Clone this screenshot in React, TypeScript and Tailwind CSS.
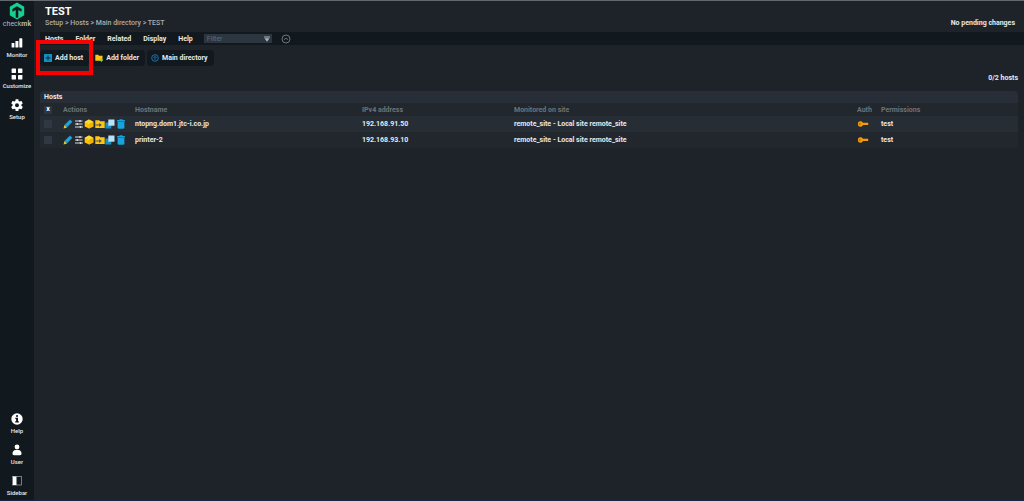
import type { ReactNode } from "react";

interface Host {
  name: string;
  ip: string;
  site: string;
  permissions: string;
}

const hosts: Host[] = [
  {
    name: "ntopng.dom1.jtc-i.co.jp",
    ip: "192.168.91.50",
    site: "remote_site - Local site remote_site",
    permissions: "test",
  },
  {
    name: "printer-2",
    ip: "192.168.93.10",
    site: "remote_site - Local site remote_site",
    permissions: "test",
  },
];

const menus = ["Hosts", "Folder", "Related", "Display", "Help"];

function Logo() {
  return (
    <svg viewBox="0 0 16 18" className="w-4 h-[18px]">
      <path d="M8 0.5 15.2 4.7v8.6L8 17.5 0.8 13.3V4.7z" fill="#15d18f" />
      <path d="M3.4 9.8V6.9L8 4.2l4.6 2.7v2.9L9.3 7.9v7.4L8 16l-1.3-.7V7.9z" fill="#11181e" />
    </svg>
  );
}

function MonitorIcon() {
  return (
    <svg viewBox="0 0 12 12" className="w-3 h-3" fill="#fff">
      <rect x="0.6" y="6" width="2.8" height="4.6" rx="0.6" />
      <rect x="4.4" y="4" width="3" height="6.6" rx="0.6" />
      <rect x="8.3" y="1.3" width="3" height="9.3" rx="0.6" />
    </svg>
  );
}

function CustomizeIcon() {
  return (
    <svg viewBox="0 0 12 12" className="w-3 h-3" fill="#fff">
      <rect x="0.6" y="0.6" width="4.4" height="4.4" rx="0.4" />
      <rect x="7" y="0.6" width="4.4" height="4.4" rx="0.4" />
      <rect x="0.6" y="7" width="4.4" height="4.4" rx="0.4" />
      <rect x="7" y="7" width="4.4" height="4.4" rx="0.4" />
    </svg>
  );
}

function SetupIcon() {
  return (
    <svg viewBox="0 0 23 23" className="w-3 h-3">
      <path
        fill="#fff"
        d="M19.9 12.9a8 8 0 0 0 0-2.2l2.4-1.9c.2-.2.3-.5.1-.8l-2.3-4c-.1-.2-.4-.3-.7-.2l-2.900 1.100a8.500 8.500 0 0 0-1.900-1.100L14.200.8a.6.6 0 0 0-.6-.5H9.400c-.3 0-.5.2-.6.500l-.4 3a8.900 8.900 0 0 0-1.900 1.100L3.600 3.800c-.3-.1-.6 0-.7.200l-2.300 4c-.1.300-.1.600.1.800l2.400 1.900a8 8 0 0 0 0 2.200L.7 14.800c-.2.200-.3.500-.1.800l2.300 4c.1.200.4.300.7.200l2.900-1.100c.6.400 1.200.8 1.900 1.100l.4 3c.1.300.3.500.6.500h4.200c.3 0 .5-.2.600-.500l.4-3a8.500 8.500 0 0 0 1.900-1.100l2.900 1.100c.3.100.6 0 .7-.200l2.300-4c.1-.300.1-.600-.1-.800zM11.500 15.600a3.800 3.800 0 1 1 0-7.600 3.800 3.800 0 0 1 0 7.600z"
      />
    </svg>
  );
}

function HelpIcon() {
  return (
    <svg viewBox="0 0 12 12" className="w-3 h-3">
      <circle cx="6" cy="6" r="5.700" fill="#fff" />
      <circle cx="6" cy="3" r="1.100" fill="#11181e" />
      <path d="M4.300 4.800H7v3.500h.9v1.200H4.200V8.300h.9V6h-.8z" fill="#11181e" />
    </svg>
  );
}

function UserIcon() {
  return (
    <svg viewBox="0 0 12 12" className="w-3 h-3" fill="#fff">
      <circle cx="6" cy="3" r="2.400" />
      <path d="M1.500 9.500C1.500 7.300 3 6 4.500 6h3c1.500 0 3 1.300 3 3.500 0 1-.5 1.700-1.500 1.700H3c-1 0-1.500-.7-1.500-1.700z" />
    </svg>
  );
}

function SidebarIcon() {
  return (
    <svg viewBox="0 0 12 12" className="w-3 h-3">
      <rect x="1.500" y="1.500" width="9" height="8.500" fill="none" stroke="#a4a9ad" strokeWidth="0.700" />
      <rect x="2" y="1.500" width="3.500" height="8.500" fill="#fff" />
    </svg>
  );
}

function PlusIcon() {
  return (
    <svg viewBox="0 0 8 8" className="w-2 h-2">
      <rect width="8" height="8" rx="0.500" fill="#1590c4" />
      <path d="M4 1.500v5M1.500 4h5" stroke="#0e2c3e" strokeWidth="1" />
    </svg>
  );
}

function FolderPlusIcon() {
  return (
    <svg viewBox="0 0 8 8" className="w-2 h-2">
      <path d="M0.300 0.800h2.900l.8 1h3.500v5H.3z" fill="#fdc615" />
      <path d="M6.300 4.600v3.200M4.700 6.200h3.200" stroke="#8ccf4d" strokeWidth="1.200" />
    </svg>
  );
}

function UpIcon() {
  return (
    <svg viewBox="0 0 8 8" className="w-2 h-2" fill="none" stroke="#1c7cc4">
      <circle cx="4" cy="4" r="3.300" strokeWidth="0.900" />
      <path d="M4 6V2.500M2.500 3.800 4 2.300l1.500 1.500" strokeWidth="0.800" />
    </svg>
  );
}

function PencilIcon() {
  return (
    <svg viewBox="0 0 10 10" className="w-[10px] h-[10px]">
      <path d="M7 0.500 9.400 2.800 4 8.500 1.400 6z" fill="#18a3dc" />
      <path d="M1.400 6 4 8.500 0.600 9.500z" fill="#fdc615" />
    </svg>
  );
}

function ParametersIcon() {
  return (
    <svg viewBox="0 0 10 10" className="w-[10px] h-[10px]" stroke="#d5d8dc" strokeWidth="1.200">
      <path d="M1 2h7.500M1 5h7.500M1 8h8" />
      <path d="M6 1v2M3.300 4v2M6.500 7v2" strokeWidth="1.400" />
    </svg>
  );
}

function ServicesIcon() {
  return (
    <svg viewBox="0 0 10 10" className="w-[10px] h-[10px]">
      <path d="M5 0.500 9.300 2.700v4.700L5 9.600.7 7.400V2.700z" fill="#fdc200" />
      <path d="M5 0.500 9.300 2.700 5 4.900.7 2.700z" fill="#ffd73b" />
      <path d="M5 4.900 9.300 2.700v4.700L5 9.600z" fill="#f3b400" />
    </svg>
  );
}

function MoveIcon() {
  return (
    <svg viewBox="0 0 10 10" className="w-[10px] h-[10px]">
      <path d="M0.300 1.300h3.900l.9 1h4.600v6.700H.3z" fill="#fdc615" />
      <path d="M0.300 5.600h4.400v1H.3zM4.200 4l2.600 2.100-2.600 2z" fill="#46506a" />
    </svg>
  );
}

function CloneIcon() {
  return (
    <svg viewBox="0 0 10 10" className="w-[10px] h-[10px]">
      <rect x="0.300" y="3.500" width="6" height="6" fill="#168fc6" />
      <rect x="3.300" y="0.500" width="6.200" height="6.200" fill="#b9e2f7" />
    </svg>
  );
}

function TrashIcon() {
  return (
    <svg viewBox="0 0 10 10" className="w-[10px] h-[10px]" fill="#18a3dc">
      <path d="M3.500 0.300h3v.8h2.400v1.400H1.100V1.100h2.400z" />
      <path d="M1.600 2.800h6.800v5.700c0 .7-.4 1.200-1.100 1.200H2.700c-.7 0-1.100-.5-1.100-1.200z" />
    </svg>
  );
}

function KeyIcon() {
  return (
    <svg viewBox="0 0 12 8" className="w-3 h-2">
      <path
        fillRule="evenodd"
        fill="#f59a0b"
        d="M3.500 1.300c1.200 0 2 .6 2.400 1.500h5.300v2.300H6c-.4 1-1.300 1.600-2.500 1.600A2.600 2.600 0 0 1 .9 4a2.600 2.600 0 0 1 2.600-2.700zM2.300 3.500v1h1v-1z"
      />
    </svg>
  );
}

function NavItem({ label, children }: { label: string; children: ReactNode }) {
  return (
    <a href="#" className="flex flex-col items-center gap-[2px] text-[6px] leading-[8px] font-medium">
      {children}
      {label}
    </a>
  );
}

function ActionButton({ label, children }: { label: string; children: ReactNode }) {
  return (
    <button className="flex items-center gap-[3px] h-4 pl-1 pr-[6px] rounded-sm bg-[#11181e] font-bold whitespace-nowrap">
      {children}
      {label}
    </button>
  );
}

const actions = [
  { label: "Edit", icon: <PencilIcon /> },
  { label: "Parameters", icon: <ParametersIcon /> },
  { label: "Services", icon: <ServicesIcon /> },
  { label: "Move", icon: <MoveIcon /> },
  { label: "Clone", icon: <CloneIcon /> },
  { label: "Delete", icon: <TrashIcon /> },
];

export default function App() {
  return (
    <div className="flex min-h-screen bg-[#1e2329] border-t border-t-[#62696e] border-b border-b-[#1b2540] font-[Roboto,sans-serif] text-[7px] leading-[10px] text-[#e8e9ea]">
      <nav className="flex flex-col justify-between items-center w-[34px] shrink-0 pt-px pb-[3px] bg-[#11181e]">
        <div className="flex flex-col items-center gap-[9px]">
          <a href="#" className="flex flex-col items-center text-[7px] leading-[8px] text-[#b4b9bc]">
            <Logo />
            <span>
              check<b>mk</b>
            </span>
          </a>
          <NavItem label="Monitor"><MonitorIcon /></NavItem>
          <NavItem label="Customize"><CustomizeIcon /></NavItem>
          <NavItem label="Setup"><SetupIcon /></NavItem>
        </div>
        <div className="flex flex-col items-center gap-[9px]">
          <NavItem label="Help"><HelpIcon /></NavItem>
          <NavItem label="User"><UserIcon /></NavItem>
          <NavItem label="Sidebar"><SidebarIcon /></NavItem>
        </div>
      </nav>

      <main className="flex-1 min-w-0 pl-[6px]">
        <header className="flex justify-between items-end h-[31px] pl-[5px] pr-[9px] pb-1">
          <div>
            <h1 className="text-[11px] leading-[12px] font-bold text-white">TEST</h1>
            <p className="font-medium text-[#a9adb0]">Setup &gt; Hosts &gt; Main directory &gt; TEST</p>
          </div>
          <span className="font-bold">No pending changes</span>
        </header>

        <div className="flex items-center h-[13px] pl-[5px] bg-[#11181e]">
          <div className="flex gap-3 font-bold">
            {menus.map((menu) => (
              <button key={menu}>{menu}</button>
            ))}
          </div>
          <div className="flex items-center ml-[11px] h-[9px] w-[68px] pr-[2px] bg-[#2c3641]">
            <input
              aria-label="Filter"
              placeholder="Filter"
              className="w-full min-w-0 h-full px-[3px] bg-transparent outline-none placeholder:text-[#606973]"
            />
            <svg viewBox="0 0 6 6" className="w-[6px] h-[6px] shrink-0" fill="#aeb4b9">
              <path d="M0 0.500h6v.9H0zM0.500 2.200h5L3 5.700z" />
            </svg>
          </div>
          <button aria-label="Hide action bar" className="ml-[9px]">
            <svg viewBox="0 0 10 10" className="w-[10px] h-[10px]" fill="none" stroke="#858b8f" strokeWidth="0.800">
              <circle cx="5" cy="5" r="4" />
              <path d="M3 5.800 5 4l2 1.800" />
            </svg>
          </button>
        </div>

        <div className="flex gap-[2px] pt-[5px]">
          <div className="relative">
            <ActionButton label="Add host"><PlusIcon /></ActionButton>
            <div className="absolute -top-[10px] -bottom-[9px] -left-1 -right-1 border-4 border-[#fb0000] pointer-events-none" />
          </div>
          <ActionButton label="Add folder"><FolderPlusIcon /></ActionButton>
          <ActionButton label="Main directory"><UpIcon /></ActionButton>
        </div>

        <section className="pr-[6px]">
          <p className="pt-[7px] pb-2 text-right font-bold">0/2 hosts</p>
          <h2 className="h-[12px] px-1 leading-[12px] rounded-t-sm bg-[#272e37] font-bold">Hosts</h2>
          <table className="w-full table-fixed text-left bg-[#21272d]">
            <thead>
              <tr className="h-[13px] text-[#6d7379]">
                <th className="w-[23px] pl-1">
                  <button aria-label="Select all" className="block w-2 h-2 bg-[#2c3540] text-[7px] leading-[7px] text-white text-center font-bold">x</button>
                </th>
                <th className="w-[72px]">Actions</th>
                <th className="w-[227px]">Hostname</th>
                <th className="w-[152px]">IPv4 address</th>
                <th>Monitored on site</th>
                <th className="w-6">Auth</th>
                <th className="w-[137px]">Permissions</th>
              </tr>
            </thead>
            <tbody>
              {hosts.map((host) => (
                <tr key={host.name} className="h-4 odd:bg-[#262d34] font-bold">
                  <td className="pl-1">
                    <input
                      type="checkbox"
                      aria-label={`Select ${host.name}`}
                      className="block appearance-none w-2 h-2 bg-[#2f3843]"
                    />
                  </td>
                  <td>
                    <div className="flex justify-between w-[63px]">
                      {actions.map((action) => (
                        <button key={action.label} aria-label={action.label}>
                          {action.icon}
                        </button>
                      ))}
                    </div>
                  </td>
                  <td>{host.name}</td>
                  <td>{host.ip}</td>
                  <td>{host.site}</td>
                  <td><KeyIcon /></td>
                  <td>{host.permissions}</td>
                </tr>
              ))}
            </tbody>
          </table>
        </section>
      </main>
    </div>
  );
}
